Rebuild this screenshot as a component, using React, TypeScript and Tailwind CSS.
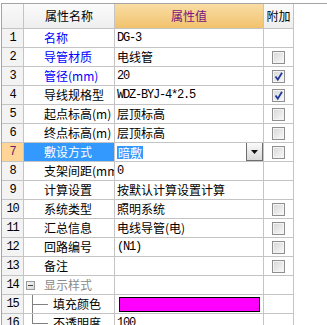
import React from "react";

type Row = {
  no: number;
  name: string;
  nameColor?: "blue" | "gray";
  value?: string;
  mono?: boolean;
  check?: "off" | "on";
  kind?: "select" | "color" | "group" | "child" | "childLast";
};

const rows: Row[] = [
  { no: 1, name: "名称", nameColor: "blue", value: "DG-3", mono: true },
  { no: 2, name: "导管材质", nameColor: "blue", value: "电线管", check: "off" },
  { no: 3, name: "管径(mm)", nameColor: "blue", value: "20", mono: true, check: "on" },
  { no: 4, name: "导线规格型", value: "WDZ-BYJ-4*2.5", mono: true, check: "on" },
  { no: 5, name: "起点标高(m)", value: "层顶标高", check: "off" },
  { no: 6, name: "终点标高(m)", value: "层顶标高", check: "off" },
  { no: 7, name: "敷设方式", value: "暗敷", check: "off", kind: "select" },
  { no: 8, name: "支架间距(mm", value: "0", mono: true },
  { no: 9, name: "计算设置", value: "按默认计算设置计算" },
  { no: 10, name: "系统类型", value: "照明系统", check: "off" },
  { no: 11, name: "汇总信息", value: "电线导管(电)", check: "off" },
  { no: 12, name: "回路编号", value: "(N1)", mono: true, check: "off" },
  { no: 13, name: "备注", value: "", check: "off" },
  { no: 14, name: "显示样式", nameColor: "gray", kind: "group" },
  { no: 15, name: "填充颜色", kind: "color" },
  { no: 16, name: "不透明度", value: "100", mono: true, kind: "childLast" },
];

const mono = "font-['Liberation_Mono',monospace] tracking-[-1.2px]";

function CheckBox({ on }: { on: boolean }) {
  return (
    <div className="w-[13px] h-[13px] border border-[#8f8f8f] bg-linear-to-br from-[#d6d6d6] to-[#fafafa] shadow-[inset_0_0_0_1px_#f4f4f4] relative">
      {on && (
        <svg width="13" height="13" viewBox="0 0 13 13" className="absolute -left-px -top-px">
          <path d="M3.5 6.5 L5.8 9.6 L10 2.8" fill="none" stroke="#22379a" strokeWidth="1.8" />
        </svg>
      )}
    </div>
  );
}

function NameCell({ r, selected }: { r: Row; selected: boolean }) {
  const color =
    selected ? "text-white" : r.nameColor === "blue" ? "text-[#0000ff]" : r.nameColor === "gray" ? "text-[#8a8a8a]" : "text-black";
  return (
    <div
      className={`w-[91px] shrink-0 border-r border-b border-[#c4c4c4] relative overflow-hidden whitespace-nowrap ${
        selected ? "bg-[#3399ff]" : "bg-white"
      }`}
    >
      {r.kind === "group" && (
        <div className="absolute left-[2px] top-[5px] w-[9px] h-[9px] border border-[#9a9a9a] bg-linear-to-br from-[#f4f4f4] to-[#d8d8d8] flex items-center justify-center">
          <div className="w-[5px] h-px bg-[#444]" />
        </div>
      )}
      {r.kind === "color" && (
        <>
          <div className="absolute left-[8px] top-0 bottom-[-1px] w-px bg-[#808080]" />
          <div className="absolute left-[8px] top-[9px] w-[16px] h-px bg-[#808080]" />
        </>
      )}
      {r.kind === "childLast" && (
        <>
          <div className="absolute left-[8px] top-0 h-[10px] w-px bg-[#808080]" />
          <div className="absolute left-[8px] top-[9px] w-[16px] h-px bg-[#808080]" />
        </>
      )}
      <div
        className={`leading-[18px] ${color} ${
          r.kind === "color" || r.kind === "childLast" ? "pl-[29px]" : "pl-[20px]"
        }`}
      >
        {r.name}
      </div>
    </div>
  );
}

function ValueCell({ r }: { r: Row }) {
  return (
    <div className="w-[149px] shrink-0 border-r border-b border-[#c4c4c4] bg-white flex items-stretch overflow-hidden whitespace-nowrap">
      {r.kind === "color" ? (
        <div className="ml-[4px] mt-[2px] w-[141px] h-[15px] border border-black bg-[#ff00ff]" />
      ) : r.kind === "select" ? (
        <>
          <div className="flex-1 pl-[2px] flex items-center">
            <span className="bg-[#3399ff] text-white leading-[13px] h-[13px] px-px">{r.value}</span>
          </div>
          <div className="w-[17px] h-[19px] -mt-px border border-[#6e6e6e] bg-linear-to-b from-[#fbfbfb] to-[#d9d9d9] flex items-center justify-center">
            <svg width="7" height="4" viewBox="0 0 7 4">
              <path d="M0 0 H7 L3.5 4 Z" fill="#111" />
            </svg>
          </div>
        </>
      ) : (
        <div className={`pl-[2px] leading-[18px] text-black ${r.mono ? mono : ""}`}>{r.value}</div>
      )}
    </div>
  );
}

export default function App() {
  return (
    <div className="w-[327px] h-[325px] bg-white overflow-hidden pt-[3px] font-['Noto_Sans_CJK_SC',sans-serif] text-[12px]">
      <div className="ml-[1px] border-t border-l border-[#a4a4a4]">
        {/* header */}
        <div className="flex h-[25px]">
          <div className="w-[22px] shrink-0 border-r border-b border-[#c4c4c4] bg-linear-to-b from-[#f9f9f9] to-[#efefef]" />
          <div className="w-[91px] shrink-0 border-r border-b border-[#c4c4c4] bg-linear-to-b from-[#fbfbfb] to-[#eeeeee] flex items-center justify-center text-black">
            属性名称
          </div>
          <div className="w-[149px] shrink-0 border-r border-b border-[#c4c4c4] bg-linear-to-b from-[#f9dda4] to-[#f1c26c] flex items-center justify-center text-[#7a137a]">
            属性值
          </div>
          <div className="w-[30px] shrink-0 border-r border-b border-[#c4c4c4] bg-linear-to-b from-[#fbfbfb] to-[#eeeeee] flex items-center justify-center text-black">
            附加
          </div>
        </div>

        {rows.map((r) => {
          const selected = r.kind === "select";
          return (
            <div key={r.no} className="flex h-[19px]">
              <div
                className={`w-[22px] shrink-0 border-r border-b border-[#c4c4c4] flex items-center justify-center leading-[18px] ${mono} ${
                  selected ? "bg-[#ffd597] text-[#6b1e6b]" : "bg-[#f3f3f3] text-black"
                }`}
              >
                {r.no}
              </div>
              <NameCell r={r} selected={selected} />
              <ValueCell r={r} />
              <div className="w-[30px] shrink-0 border-r border-b border-[#c4c4c4] bg-white flex items-center justify-center">
                {r.check && <CheckBox on={r.check === "on"} />}
              </div>
            </div>
          );
        })}
      </div>
    </div>
  );
}
